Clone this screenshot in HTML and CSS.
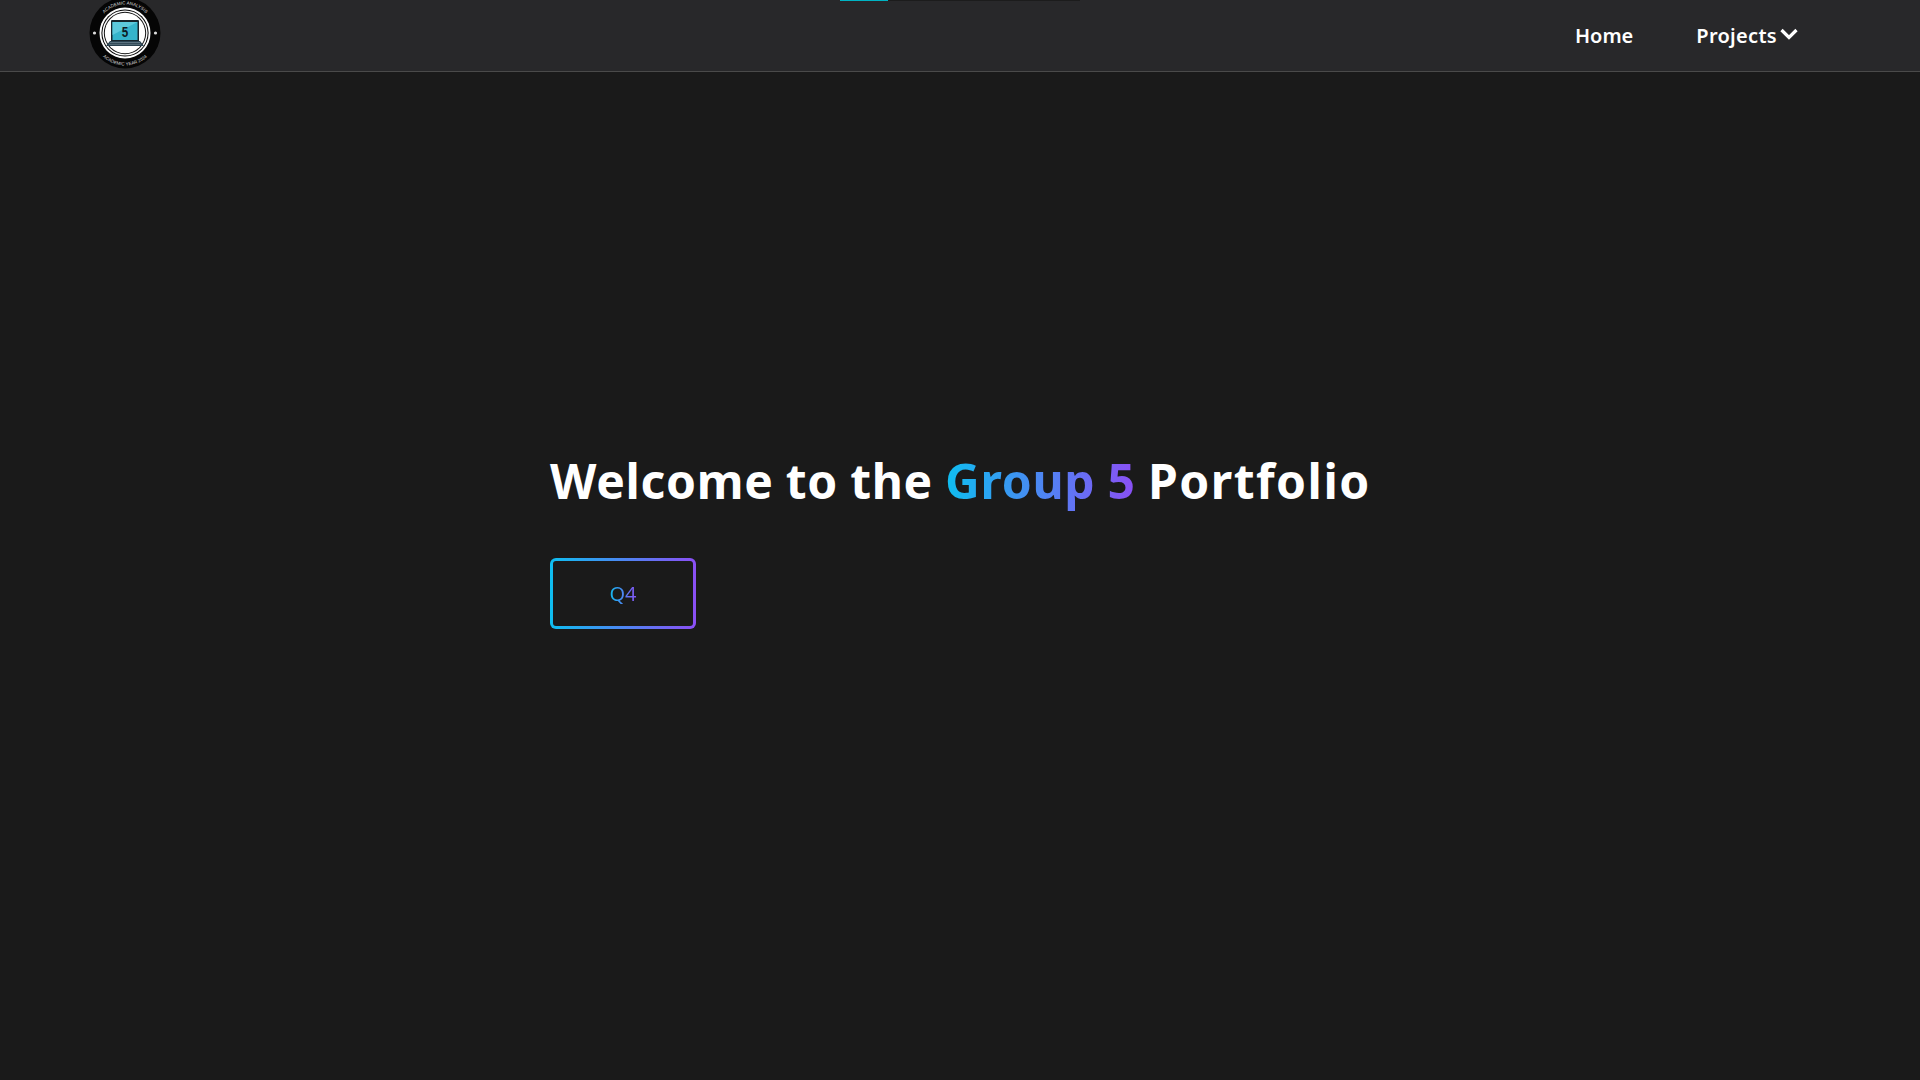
FILE: index.html
```html
<!DOCTYPE html>
<html lang="en">
<head>
<meta charset="utf-8">
<title>Group 5 Portfolio</title>
<link rel="stylesheet" href="styles.css">
</head>
<body>
<header class="nav">
  <svg class="logo" viewBox="0 0 72 72" aria-label="Group 5 logo">
    <defs>
      <path id="arcTop" d="M7.500 36a28.500 28.500 0 0 1 57 0"/>
      <path id="arcBottom" d="M3.500 36a32.500 32.500 0 0 0 65 0"/>
    </defs>
    <circle cx="36" cy="36" r="35.500" fill="#050505"/>
    <circle cx="36" cy="36" r="25.500" fill="#fff"/>
    <circle cx="36" cy="36" r="23.600" fill="#050505"/>
    <circle cx="36" cy="36" r="22.600" fill="#fff"/>
    <circle cx="36" cy="36" r="21.200" fill="#111"/>
    <circle cx="36" cy="36" r="20.200" fill="#fff"/>
    <circle cx="5.500" cy="36" r="1.600" fill="#ddd"/>
    <circle cx="66.500" cy="36" r="1.600" fill="#ddd"/>
    <text class="logo-text"><textPath href="#arcTop" startOffset="50%" text-anchor="middle">ACADEMIC ANALYSIS</textPath></text>
    <text class="logo-text"><textPath href="#arcBottom" startOffset="50%" text-anchor="middle">ACADEMIC YEAR 2024</textPath></text>
    <path d="M23 23h26a1 1 0 0 1 1 1v20H22V24a1 1 0 0 1 1-1z" fill="#16242c"/>
    <path d="M23.500 25h25v18h-25z" fill="#35b4cb"/>
    <path d="M23.500 25h25L23.500 38z" fill="#5cc9dc"/>
    <path d="M21 44h30l4 5H17z" fill="#29414f"/>
    <path d="M21 45.500h30M20 47.300h32" stroke="#7f95a3" stroke-width=".6"/>
    <text class="logo-five" transform="translate(36 40) scale(.78 1)">5</text>
  </svg>
  <div class="progress"><div class="progress-fill"></div></div>
  <nav class="links">
    <a class="link" href="#">Home</a>
    <a class="link link-drop" href="#"><span class="link-label">Projects</span>
      <svg class="chev" viewBox="0 0 18 12"><path d="M1.500 2l7.500 7.500L16.500 2" fill="none" stroke="#fff" stroke-width="3.200"/></svg>
    </a>
  </nav>
</header>
<main class="hero">
  <div class="hero-inner">
    <h1 class="title">Welcome to the <span class="grad">Group 5</span> <span class="title-end">Portfolio</span></h1>
    <a class="btn" href="#"><span class="grad">Q4</span></a>
  </div>
</main>
</body>
</html>
```
FILE: styles.css
```css
* { box-sizing: border-box; }
html, body { margin: 0; height: 100%; }
body {
  background: #1a1a1a;
  color: #fff;
  font-family: "Noto Sans", "Open Sans", sans-serif;
  overflow: hidden;
}
.nav {
  position: relative;
  height: 72px;
  background: #28282a;
  border-bottom: 1px solid #4a4a4a;
  display: flex;
  align-items: center;
  justify-content: space-between;
  padding: 0 122px 0 89px;
}
.logo { width: 72px; height: 72px; margin-top: -5px; flex: none; }
.logo-text { font-family: "Liberation Sans", sans-serif; font-size: 4.500px; fill: #ddd; }
.logo-five { font-family: "Liberation Sans", sans-serif; font-size: 15px; font-weight: 700; fill: #0d1b24; text-anchor: middle; }
.progress {
  position: absolute;
  top: 0;
  left: 840px;
  width: 240px;
  height: 1px;
  background: #1c1c1c;
}
.progress-fill { width: 48px; height: 100%; background: #00b4c4; }
.links { display: flex; align-items: center; gap: 63px; }
.link {
  color: #fff;
  text-decoration: none;
  font-size: 20px;
  font-weight: 600;
  line-height: 28px;
}
.link-label { letter-spacing: 0.3px; }
.link-drop { display: flex; align-items: center; gap: 3px; }
.chev { width: 18px; height: 12px; margin-top: -3px; }
.hero {
  height: 1008px;
  padding-bottom: 72px;
  display: flex;
  align-items: center;
  justify-content: center;
}
.hero-inner { width: 820px; }
.title {
  margin: 0 0 48px;
  padding-top: 1px;
  font-size: 48px;
  line-height: 58px;
  font-weight: 700;
  letter-spacing: 0.7px;
  word-spacing: -1px;
  white-space: nowrap;
}
.title-end { letter-spacing: 1.5px; }
.grad {
  background: linear-gradient(90deg, #0ebef0, #8b4ff5);
  -webkit-background-clip: text;
  background-clip: text;
  color: transparent;
}
.btn {
  display: flex;
  align-items: center;
  justify-content: center;
  width: 146px;
  height: 71px;
  padding-bottom: 1px;
  border: 3px solid transparent;
  border-radius: 6px;
  background:
    linear-gradient(#1a1a1a, #1a1a1a) padding-box,
    linear-gradient(90deg, #0ebef0, #8b4ff5) border-box;
  font-size: 20px;
  text-decoration: none;
}
```
